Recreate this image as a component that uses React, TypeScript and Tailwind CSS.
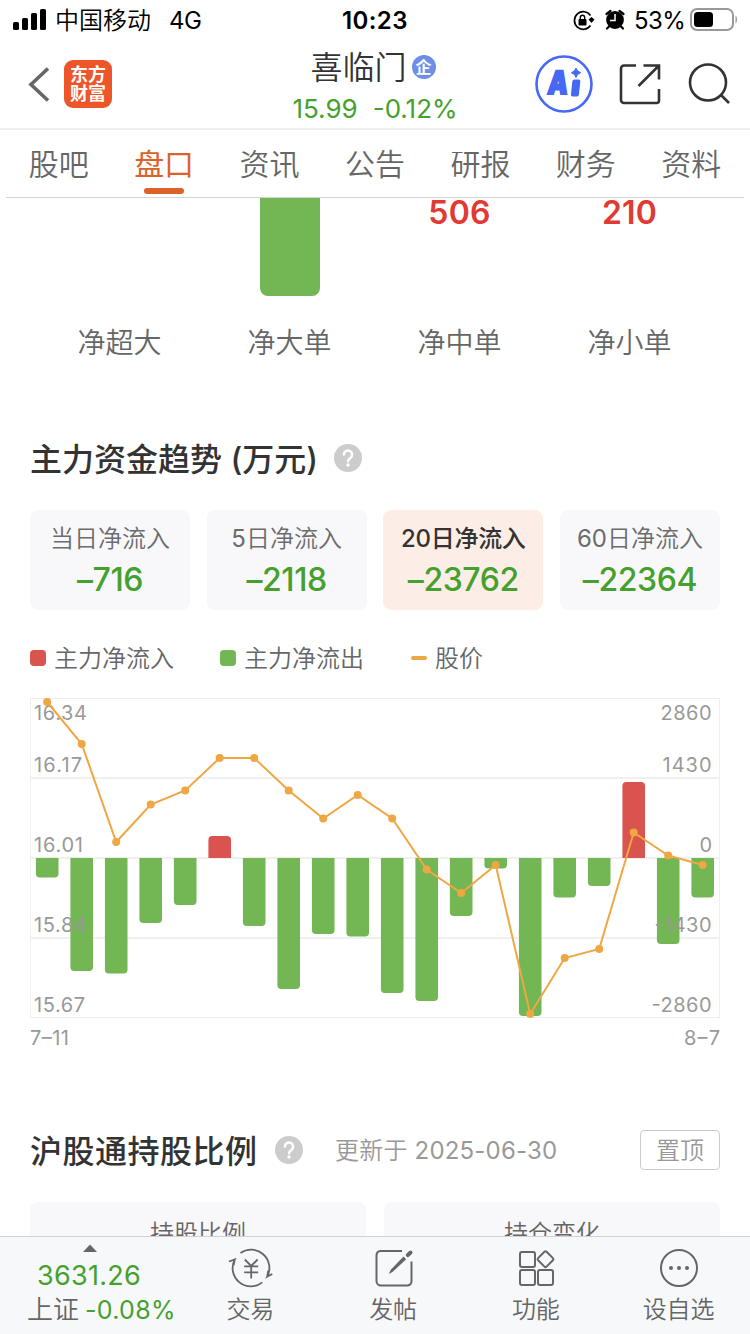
import type { ReactNode } from "react";

const FONT = "font-['Inter','Noto_Sans_CJK_SC',sans-serif] font-[350]";

function StatusBar() {
  return (
    <div className="flex h-10 shrink-0 items-center text-black">
      <svg className="ml-[13px]" width="33" height="40" viewBox="13 0 33 40">
        <rect x="13" y="22" width="6" height="8" rx="1.5" />
        <rect x="22" y="18" width="6" height="12" rx="1.5" />
        <rect x="31" y="13" width="6" height="17" rx="1.5" />
        <rect x="40" y="9" width="6" height="21" rx="1.5" />
      </svg>
      <span className="ml-[9px] w-[114px] pt-[2px] text-2xl leading-10">中国移动</span>
      <span className="w-[173px] pt-[2px] text-2xl leading-10 font-normal tracking-[-0.5px]">4G</span>
      <span className="w-[229px] pt-[2px] text-2xl leading-10 font-semibold tracking-[0.4px]">10:23</span>
      <svg width="24" height="40" viewBox="571 0 24 40" fill="none">
        <path d="M590.500 15.500a8.800 8.800 0 1 0 0 10" stroke="#000" strokeWidth="1.700" />
        <path d="M588.500 19.500l3-2.500 3 2.500-3 3.500z" fill="#000" />
        <rect x="578.500" y="19" width="8" height="6.500" rx="1" fill="#000" />
        <path d="M580.300 19v-1.500a2.200 2.200 0 0 1 4.400 0V19" stroke="#000" strokeWidth="1.400" />
      </svg>
      <svg className="ml-2" width="24" height="40" viewBox="603 0 24 40" fill="none">
        <circle cx="615" cy="20" r="8.900" fill="#000" />
        <path d="M606.500 14l4-3M623.500 14l-4-3M609 26.500l-2 2M621 26.500l2 2" stroke="#000" strokeWidth="2.200" strokeLinecap="round" />
        <path d="M615 14v6.500h-5" stroke="#fff" strokeWidth="1.500" />
      </svg>
      <span className="ml-[7px] w-[55px] pt-[2px] text-2xl leading-10 font-normal tracking-[-0.6px]">53%</span>
      <svg width="50" height="40" viewBox="690 0 50 40" fill="none">
        <rect x="692" y="9" width="42" height="21" rx="6" stroke="#999" strokeWidth="2" />
        <rect x="695" y="12" width="19" height="15" rx="3.500" fill="#000" />
        <path d="M736.500 15.500c2 1 2 7 0 8z" fill="#999" />
      </svg>
    </div>
  );
}

function Header() {
  return (
    <div className="flex h-[90px] shrink-0 border-b-2 border-[#eee]">
      <div className="flex w-[215px] items-center pl-7">
        <svg width="22" height="36" viewBox="28 66 22 36" fill="none" stroke="#666" strokeWidth="3.600">
          <path d="M48 68.500 31 84.500 48 100.500" />
        </svg>
        <div className="ml-[14px] flex size-12 flex-col items-center justify-center rounded-[9px] bg-[#ee5528] text-lg leading-[19px] font-bold text-white">
          <span>东方</span>
          <span>财富</span>
        </div>
      </div>
      <div className="flex w-[320px] flex-col items-center">
        <div className="mt-[7px] flex h-[42px] items-center pr-1 text-[32px] leading-[42px] text-[#333]">
          喜临门
          <span className="ml-[5px] flex size-6 -translate-y-px items-center justify-center rounded-full bg-[#6e8fe4] text-[16px] leading-6 font-bold text-white">
            企
          </span>
        </div>
        <div className="mt-[2px] flex gap-[15px] text-[26px] leading-9 font-normal text-[#46a02d]">
          <span>15.99</span>
          <span>-0.12%</span>
        </div>
      </div>
      <svg width="215" height="88" viewBox="535 40 215 88" fill="none">
        <circle cx="564" cy="84" r="27.500" stroke="#4568f5" strokeWidth="2.600" />
        <g transform="translate(547 94) skewX(-6)" fill="#4568f5" stroke="#4568f5" strokeWidth="2">
          <text x="0" y="0" fontSize="32" fontWeight="900" textLength="20" lengthAdjust="spacingAndGlyphs">A</text>
          <rect x="25" y="-13.500" width="6" height="15" rx="1" />
        </g>
        <path d="M576 68q1 3.700 4.700 4.700-3.700 1-4.700 4.700-1-3.700-4.700-4.700 3.700-1 4.700-4.700z" fill="#4568f5" stroke="#4568f5" />
        <g stroke="#333" strokeWidth="2.600">
          <path d="M636 65.500H624a3 3 0 0 0-3 3V100a3 3 0 0 0 3 3h32.500a2.500 2.500 0 0 0 2.500-2.500V89" />
          <path d="M643.500 65.500H659V79.500M658.500 66 638.500 86" />
          <circle cx="708" cy="82.500" r="18" />
          <path d="M720.500 94.500 729 103" />
        </g>
      </svg>
    </div>
  );
}

const tabs = ["股吧", "盘口", "资讯", "公告", "研报", "财务", "资料"];

function Tabs() {
  return (
    <div className="mx-[6px] flex h-[68px] shrink-0 border-b border-[#d3d3d3]">
      {tabs.map((tab, i) => (
        <div key={tab} className="flex w-[105.430px] flex-col items-center">
          <span
            className={
              i === 1
                ? "h-[58px] text-[30px] leading-[69px] font-normal text-[#dc6229]"
                : "h-[58px] text-[30px] leading-[69px] text-[#666]"
            }
          >
            {tab}
          </span>
          {i === 1 && <div className="h-[6px] w-10 rounded-full bg-[#dc6229]" />}
        </div>
      ))}
    </div>
  );
}

function OrderBars() {
  return (
    <div className="grid h-[190px] grid-cols-[repeat(4,170px)] grid-rows-[98px_92px] justify-items-center pl-[34.500px]">
      <span />
      <div className="h-[98px] w-[60px] rounded-b-lg bg-[#73b654]" />
      <span className="text-[32px] leading-[29px] font-semibold tracking-[0.2px] text-[#e03a33]">506</span>
      <span className="text-[32px] leading-[29px] font-semibold tracking-[0.2px] text-[#e03a33]">210</span>
      {["净超大", "净大单", "净中单", "净小单"].map((t) => (
        <span key={t} className="pt-px text-[28px] leading-[92px] text-[#666]">
          {t}
        </span>
      ))}
    </div>
  );
}

function Help() {
  return (
    <svg width="28" height="28" viewBox="0 0 28 28" fill="none">
      <circle cx="14" cy="14" r="14" fill="#ccc" />
      <path d="M9.900 10.500a4.100 4.100 0 1 1 6.700 3.300c-1.600 1.100-2.600 1.700-2.600 3.400" stroke="#fff" strokeWidth="2.500" strokeLinecap="round" />
      <circle cx="14" cy="21" r="1.700" fill="#fff" />
    </svg>
  );
}

const periods = [
  { days: "", label: "当日净流入", value: "–716" },
  { days: "5", label: "日净流入", value: "–2118" },
  { days: "20", label: "日净流入", value: "–23762", active: true },
  { days: "60", label: "日净流入", value: "–22364" },
];

function Trend() {
  return (
    <>
      <div className="flex h-[140px] items-center pl-[30px]">
        <h2 className="w-[304px] pt-[3px] text-[32px] leading-10 font-medium whitespace-nowrap text-[#333]">主力资金趋势 (万元)</h2>
        <Help />
      </div>
      <div className="-mt-[18px] flex justify-between px-[30px]">
        {periods.map((p) => (
          <div
            key={p.value}
            className={
              p.active
                ? "flex h-[100px] w-40 flex-col items-center rounded-lg bg-[#fceee6]"
                : "flex h-[100px] w-40 flex-col items-center rounded-lg bg-[#f8f8fb]"
            }
          >
            <span
              className={
                p.active
                  ? "mt-[9px] text-2xl leading-10 font-medium tracking-[-0.3px] text-[#333]"
                  : "mt-[9px] text-2xl leading-10 text-[#6c6c6c]"
              }
            >
              <span className={p.active ? "font-medium" : "font-normal"}>{p.days}</span>
              {p.label}
            </span>
            <span className="text-[32px] leading-[42px] font-medium tracking-[-0.4px] text-[#46a02d]">{p.value}</span>
          </div>
        ))}
      </div>
      <div className="flex h-[88px] items-center pt-2 pl-[30px] text-2xl text-[#666]">
        <span className="size-4 rounded bg-[#d9534f]" />
        <span className="ml-2 w-[166px] pt-[2px]">主力净流入</span>
        <span className="size-4 rounded bg-[#73b654]" />
        <span className="ml-2 w-[167px] pt-[2px]">主力净流出</span>
        <span className="h-1 w-4 rounded-full bg-[#eea742]" />
        <span className="ml-2 pt-[2px]">股价</span>
      </div>
    </>
  );
}

const bars = [877.5, 971, 973.5, 923, 905, 836, 926, 989, 934, 936.5, 993, 1001, 916, 868.5, 1016, 897.5, 886, 782, 944, 897.5];
const prices = [702, 744, 842, 804.5, 790.5, 758, 758, 790.5, 818.5, 795, 818.5, 869.5, 893, 865, 1014, 958, 949, 832.5, 855.5, 865];
const ZERO = 858;
const centerX = (i: number) => 47.2 + i * 34.5;

function barPath(i: number, end: number) {
  const l = centerX(i) - 11.3;
  const r = centerX(i) + 11.3;
  const k = end > ZERO ? -4 : 4;
  return `M${l} ${ZERO}V${end + k}Q${l} ${end} ${l + 4} ${end}H${r - 4}Q${r} ${end} ${r} ${end + k}V${ZERO}Z`;
}

const leftAxis = [
  { t: "16.34", y: 720, w: 53 },
  { t: "16.17", y: 772, w: 48 },
  { t: "16.01", y: 852, w: 49 },
  { t: "15.84", y: 932, w: 53 },
  { t: "15.67", y: 1012, w: 51 },
];
const rightAxis = [
  { t: "2860", y: 720, w: 51 },
  { t: "1430", y: 772, w: 49 },
  { t: "0", y: 852, w: 12 },
  { t: "-1430", y: 932, w: 57 },
  { t: "-2860", y: 1012, w: 60 },
];

function Chart() {
  return (
    <svg className="block" width="750" height="360" viewBox="0 698 750 360" fill="none">
      <rect x="30.500" y="698.500" width="689" height="319" stroke="#eee" />
      <path d="M30 778H720M30 858H720M30 938H720" stroke="#f0f0f0" strokeWidth="2" />
      {bars.map((end, i) => (
        <path key={i} d={barPath(i, end)} fill={end > ZERO ? "#73b654" : "#d9534f"} />
      ))}
      <g fill="#999" fontSize="20" fontWeight="400">
        {leftAxis.map((a) => (
          <text key={a.t} x="34" y={a.y} textLength={a.w}>{a.t}</text>
        ))}
        {rightAxis.map((a) => (
          <text key={a.t} x={711.500 - a.w} y={a.y} textLength={a.w}>{a.t}</text>
        ))}
        <text x="30" y="1045" textLength="39">7–11</text>
        <text x="684" y="1045" textLength="36">8–7</text>
      </g>
      <polyline points={prices.map((y, i) => `${centerX(i)},${y}`).join(" ")} stroke="#eea742" strokeWidth="2" />
      {prices.map((y, i) => (
        <circle key={i} cx={centerX(i)} cy={y} r="4" fill="#eea742" />
      ))}
    </svg>
  );
}

function Holdings() {
  return (
    <>
      <div className="mt-[52px] flex h-20 items-center pl-[30px]">
        <h2 className="w-[245px] pt-[3px] text-[32px] leading-10 font-medium tracking-[0.5px] text-[#333]">沪股通持股比例</h2>
        <Help />
        <span className="ml-8 w-[305px] pt-[2px] text-2xl leading-10 tracking-[0.2px] text-[#999]">
          更新于 <span className="font-normal">2025-06-30</span>
        </span>
        <button className="h-10 w-20 rounded border border-[#ccc] pt-px text-2xl leading-[38px] text-[#999]">置顶</button>
      </div>
      <div className="mt-3 flex gap-[18px] px-[30px]">
        {["持股比例", "持仓变化"].map((t) => (
          <div key={t} className="h-[100px] w-[336px] rounded-lg bg-[#f8f8fb] pt-3 text-center text-2xl leading-10 text-[#666]">
            {t}
          </div>
        ))}
      </div>
    </>
  );
}

function FooterItem({ label, children }: { label: string; children: ReactNode }) {
  return (
    <div className="flex flex-1 flex-col items-center">
      <svg className="mt-[10px]" width="46" height="42" viewBox="-1 0 46 42" fill="none" stroke="#666" strokeWidth="2">
        {children}
      </svg>
      <span className="pt-px text-2xl leading-10">{label}</span>
    </div>
  );
}

function Footer() {
  return (
    <div className="flex h-[98px] shrink-0 border-t border-[#cfd2dc] bg-[#f7f8fa] text-[#666]">
      <div className="flex w-[179px] flex-col">
        <svg className="mt-[7px] ml-[83px]" width="14" height="8" viewBox="0 0 14 8">
          <path d="M0 8 7 .5 14 8z" fill="#666" />
        </svg>
        <span className="mt-[6px] ml-[37px] h-[35px] text-[27px] leading-9 font-normal tracking-[0.3px] text-[#46a02d]">3631.26</span>
        <div className="ml-[27px] flex gap-[6px] text-[26px] leading-[34px] whitespace-nowrap">
          上证
          <span className="text-[25px] font-normal tracking-[0.3px] text-[#46a02d]">-0.08%</span>
        </div>
      </div>
      <FooterItem label="交易">
        <path d="M12.500 6A18.300 18.300 0 0 1 39.200 29.600L44.300 27M34.300 35.400A18.300 18.300 0 0 1 6.800 12.400L1 14.500M39.200 29.600l1-6M6.800 12.400l-1.200 6" strokeWidth="1.800" />
        <path d="M16.800 12.500 23.200 19 29.600 12.500M23.200 19V31.500M16.200 19.300h14M16.200 25.300h14" strokeWidth="1.800" />
      </FooterItem>
      <FooterItem label="发帖">
        <path d="M31 4H9.500A4.500 4.500 0 0 0 5.500 8.500V34a4.500 4.500 0 0 0 4.500 4.500H36.500a4.500 4.500 0 0 0 4-4.500V14.500" />
        <path d="M17.800 27l2-4.300L32.500 9.500l2.700 2.700L21.500 25z" fill="#666" stroke="none" />
        <path d="M36.800 8.200 39.500 5.500" strokeWidth="4" strokeLinecap="round" />
      </FooterItem>
      <FooterItem label="功能">
        <rect x="6" y="5" width="15" height="15" rx="2" />
        <rect x="6" y="23" width="15" height="15" rx="2" />
        <rect x="24" y="23" width="15" height="15" rx="2" />
        <rect x="25.500" y="6.200" width="12" height="12" rx="1.500" transform="rotate(45 31.500 12.200)" />
      </FooterItem>
      <FooterItem label="设自选">
        <circle cx="22" cy="21" r="18" />
        <g fill="#666" stroke="none">
          <circle cx="14" cy="21" r="2" />
          <circle cx="22" cy="21" r="2" />
          <circle cx="30" cy="21" r="2" />
        </g>
      </FooterItem>
    </div>
  );
}

export default function App() {
  return (
    <div className={`flex h-[1334px] w-[750px] flex-col overflow-hidden bg-white ${FONT}`}>
      <StatusBar />
      <Header />
      <Tabs />
      <main className="min-h-0 flex-1 overflow-hidden">
        <OrderBars />
        <Trend />
        <Chart />
        <Holdings />
      </main>
      <Footer />
    </div>
  );
}
